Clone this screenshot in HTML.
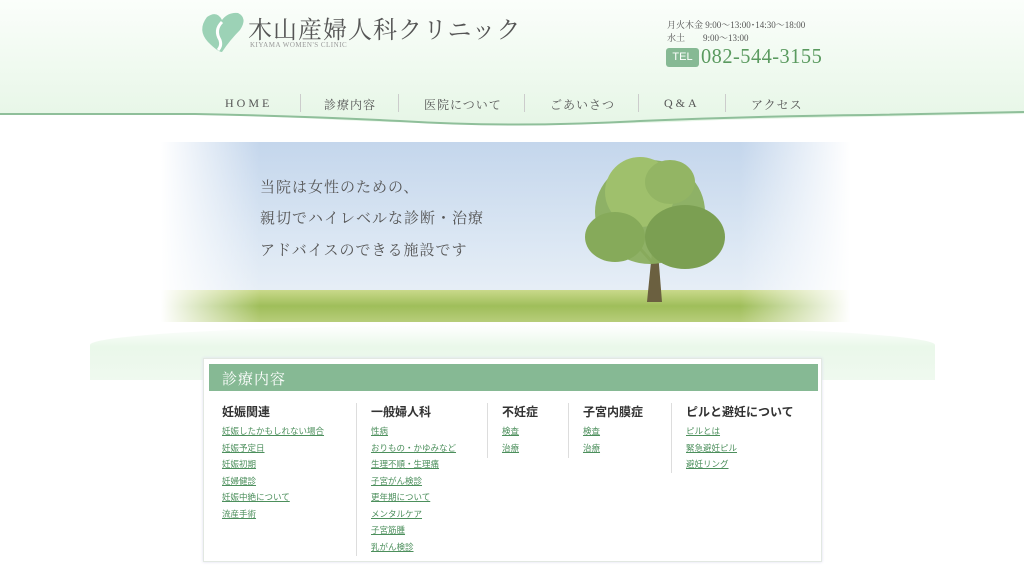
<!DOCTYPE html>
<html><head><meta charset="utf-8"><style>
*{margin:0;padding:0;box-sizing:border-box}
body{width:1024px;height:572px;overflow:hidden;background:#fff;font-family:"Liberation Serif","Noto Serif CJK SC",serif;position:relative}
.hdr{position:absolute;left:0;top:0;width:1024px;height:130px}
.abs{position:absolute;white-space:nowrap}
.nav{top:96px;font-size:12px;color:#555;letter-spacing:1px}
.sep{position:absolute;top:94px;width:1px;height:18px;background:#ccc}
.banner{position:absolute;left:150px;top:142px;width:720px;height:180px;background:linear-gradient(#c4d6ec,#dde8f4 60%,#eef3f8);overflow:hidden}
.banner .fadeL{position:absolute;left:0;top:0;width:110px;height:180px;background:linear-gradient(90deg,#fff 10%,rgba(255,255,255,0))}
.banner .fadeR{position:absolute;right:0;top:0;width:130px;height:180px;background:linear-gradient(270deg,#fff 15%,rgba(255,255,255,0))}
.grass{position:absolute;left:0;top:148px;width:720px;height:32px;background:linear-gradient(#c9d98a,#9fbe5a 50%,#b7cd7a)}
.btxt{font-size:15px;color:#555;letter-spacing:1px}
.box{position:absolute;left:203px;top:358px;width:619px;height:204px;background:#fff;border:1px solid #e2e8e2;box-shadow:0 0 3px #dde}
.ttl{position:absolute;left:5px;top:5px;width:609px;height:27px;background:#86b994;color:#fff;font-size:15px;padding:4px 13px;letter-spacing:1px}
.col{position:absolute;top:44px;font-family:"Liberation Sans","Noto Sans CJK JP",sans-serif}
.col h4{font-size:12px;color:#333;margin-bottom:8px;height:14px}
.col a{display:block;font-size:8.5px;color:#4c8f5c;text-decoration:underline;height:16.5px}
.vl{position:absolute;top:44px;width:1px;background:#ddd}
</style></head><body>
<div class="hdr">
<svg width="1024" height="130" style="position:absolute;left:0;top:0">
<defs><linearGradient id="g" x1="0" y1="0" x2="0" y2="1"><stop offset="0" stop-color="#fbfefb"/><stop offset="1" stop-color="#e6f6e6"/></linearGradient></defs>
<path d="M0 0H1024V114Q900 116 720 120Q512 130 300 118L200 114H0Z" fill="url(#g)"/>
<path d="M0 114H195Q300 116 400 121Q512 128 640 121Q760 116 870 115L1024 112" stroke="#8fbf9a" stroke-width="2" fill="none"/>
<path d="M207 17Q197 30 208 42Q218 52 222 52Q230 40 240 30Q248 18 238 13Q228 12 222 20Q217 10 207 17Z" fill="#9cd2b6"/>
<path d="M222 22Q214 30 220 40Q222 46 218 50" stroke="#fff" stroke-width="3" fill="none"/>
</svg>
<div class="abs" style="left:248px;top:10px;font-size:24px;color:#555;letter-spacing:1px">木山産婦人科クリニック</div>
<div class="abs" style="left:250px;top:41px;font-size:7px;color:#999;letter-spacing:.5px">KIYAMA WOMEN'S CLINIC</div>
<div class="abs" style="left:667px;top:18px;font-size:9px;color:#555">月火木金&nbsp;9:00～13:00･14:30～18:00</div>
<div class="abs" style="left:667px;top:31px;font-size:9px;color:#555">水土&nbsp;&nbsp;&nbsp;&nbsp;&nbsp;&nbsp;&nbsp;&nbsp;9:00～13:00</div>
<div class="abs" style="left:666px;top:48px;width:33px;height:19px;background:#86b994;border-radius:3px;color:#fff;font-size:11px;text-align:center;line-height:19px;font-family:'Liberation Sans',sans-serif">TEL</div>
<div class="abs" style="left:701px;top:44px;font-size:21px;color:#5a9a5f;letter-spacing:.5px;transform:scaleX(.97);transform-origin:left">082-544-3155</div>
<div class="abs nav" style="left:225px;letter-spacing:3px">HOME</div>
<div class="sep" style="left:300px"></div>
<div class="abs nav" style="left:324px">診療内容</div>
<div class="sep" style="left:398px"></div>
<div class="abs nav" style="left:424px">医院について</div>
<div class="sep" style="left:524px"></div>
<div class="abs nav" style="left:550px">ごあいさつ</div>
<div class="sep" style="left:638px"></div>
<div class="abs nav" style="left:664px;letter-spacing:3px">Q&amp;A</div>
<div class="sep" style="left:725px"></div>
<div class="abs nav" style="left:751px">アクセス</div>
</div>
<div style="position:absolute;left:90px;top:325px;width:845px;height:55px;background:linear-gradient(#fff,#eaf8ea 40%,#eff9ef);border-radius:50% 50% 0 0/20px 20px 0 0"></div>
<div class="banner">
<div class="grass"></div>
<svg width="720" height="180" style="position:absolute;left:0;top:0">
<path d="M497 160L502 110L508 110L512 160Z" fill="#6b6040"/>
<path d="M502 120L480 95M508 115L535 90" stroke="#6b6040" stroke-width="3"/>
<ellipse cx="500" cy="70" rx="55" ry="52" fill="#8aae5e" opacity=".95"/>
<ellipse cx="490" cy="50" rx="35" ry="35" fill="#9fc06c"/>
<ellipse cx="535" cy="95" rx="40" ry="32" fill="#7b9f52"/>
<ellipse cx="465" cy="95" rx="30" ry="25" fill="#86aa5a"/>
<ellipse cx="520" cy="40" rx="25" ry="22" fill="#93b564"/>
</svg>
<div class="fadeL"></div><div class="fadeR"></div>
<div class="abs btxt" style="left:110px;top:34px">当院は女性のための、</div>
<div class="abs btxt" style="left:110px;top:65px">親切でハイレベルな診断・治療</div>
<div class="abs btxt" style="left:110px;top:97px">アドバイスのできる施設です</div>
</div>
<div class="box">
<div class="ttl">診療内容</div>
<div class="col" style="left:18px"><h4>妊娠関連</h4><a>妊娠したかもしれない場合</a><a>妊娠予定日</a><a>妊娠初期</a><a>妊婦健診</a><a>妊娠中絶について</a><a>流産手術</a></div>
<div class="vl" style="left:152px;height:153px"></div>
<div class="col" style="left:167px"><h4>一般婦人科</h4><a>性病</a><a>おりもの・かゆみなど</a><a>生理不順・生理痛</a><a>子宮がん検診</a><a>更年期について</a><a>メンタルケア</a><a>子宮筋腫</a><a>乳がん検診</a></div>
<div class="vl" style="left:283px;height:55px"></div>
<div class="col" style="left:298px"><h4>不妊症</h4><a>検査</a><a>治療</a></div>
<div class="vl" style="left:364px;height:55px"></div>
<div class="col" style="left:379px"><h4>子宮内膜症</h4><a>検査</a><a>治療</a></div>
<div class="vl" style="left:467px;height:70px"></div>
<div class="col" style="left:482px"><h4>ピルと避妊について</h4><a>ピルとは</a><a>緊急避妊ピル</a><a>避妊リング</a></div>
</div>
</body></html>
